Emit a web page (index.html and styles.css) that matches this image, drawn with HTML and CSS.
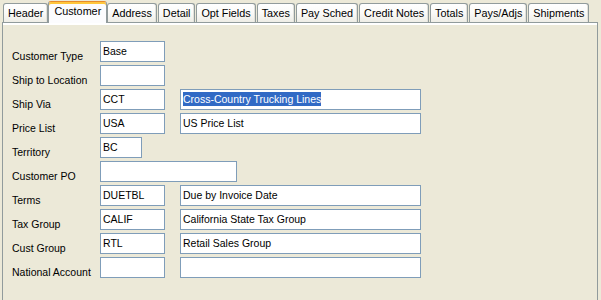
FILE: index.html
```html
<!DOCTYPE html>
<html>
<head>
<meta charset="utf-8">
<link rel="stylesheet" href="styles.css">
</head>
<body>
<div class="window">
  <div class="tabs">
    <div class="tab">Header</div>
    <div class="tab active">Customer</div>
    <div class="tab">Address</div>
    <div class="tab">Detail</div>
    <div class="tab">Opt Fields</div>
    <div class="tab">Taxes</div>
    <div class="tab">Pay Sched</div>
    <div class="tab">Credit Notes</div>
    <div class="tab">Totals</div>
    <div class="tab">Pays/Adjs</div>
    <div class="tab">Shipments</div>
  </div>
  <div class="panel">
    <div class="row">
      <div class="label">Customer Type</div>
      <div class="field code">Base</div>
    </div>
    <div class="row">
      <div class="label">Ship to Location</div>
      <div class="field code"></div>
    </div>
    <div class="row">
      <div class="label">Ship Via</div>
      <div class="field code">CCT</div>
      <div class="field desc"><span class="sel">Cross-Country Trucking Lines</span></div>
    </div>
    <div class="row">
      <div class="label">Price List</div>
      <div class="field code">USA</div>
      <div class="field desc">US Price List</div>
    </div>
    <div class="row">
      <div class="label">Territory</div>
      <div class="field short">BC</div>
    </div>
    <div class="row">
      <div class="label">Customer PO</div>
      <div class="field po"></div>
    </div>
    <div class="row">
      <div class="label">Terms</div>
      <div class="field code">DUETBL</div>
      <div class="field desc">Due by Invoice Date</div>
    </div>
    <div class="row">
      <div class="label">Tax Group</div>
      <div class="field code">CALIF</div>
      <div class="field desc">California State Tax Group</div>
    </div>
    <div class="row">
      <div class="label">Cust Group</div>
      <div class="field code">RTL</div>
      <div class="field desc">Retail Sales Group</div>
    </div>
    <div class="row">
      <div class="label">National Account</div>
      <div class="field code"></div>
      <div class="field desc"></div>
    </div>
  </div>
</div>
</body>
</html>
```
FILE: styles.css
```css
html, body {
  margin: 0;
  padding: 0;
  background: #ECE9D8;
  overflow: hidden;
}
body {
  font-family: "Liberation Sans", Arial, sans-serif;
  font-size: 10.5px;
  color: #000;
}
.window {
  width: 601px;
  height: 300px;
}
.tabs {
  display: flex;
  align-items: flex-end;
  height: 22px;
  padding-left: 3px;
  box-sizing: border-box;
  font-size: 10.8px;
}
.tab {
  box-sizing: border-box;
  height: 19px;
  padding: 2px 4px 0 4px;
  line-height: 14px;
  border: 1px solid #919B9C;
  border-bottom: none;
  border-radius: 3px 3px 0 0;
  background: linear-gradient(to bottom, #FFFFFF 0%, #FAFAF8 50%, #EEEDE6 100%);
  box-shadow: inset -1px 0 0 #E3E2DA;
  margin-right: 1px;
  white-space: nowrap;
}
.tab.active {
  position: relative;
  z-index: 1;
  height: 22px;
  margin: 0 0 -1px -1px;
  padding: 2px 5px 0 5px;
  background: #FCFCFE;
  border-top: 1px solid #E68B2C;
  box-shadow: inset 0 2px 0 #FFC73C;
}
.panel {
  box-sizing: border-box;
  height: 290px;
  margin: 0 3px 0 2px;
  border: 1px solid #919B9C;
  background: linear-gradient(to bottom, #FFFFFF 0, #FFFFFF 2px, #ECE9D8 2px);
  padding: 18px 0 0 9px;
}
.row {
  display: flex;
  height: 21px;
  margin-bottom: 3px;
}
.label {
  width: 88px;
  padding-top: 9px;
  line-height: 13px;
  white-space: nowrap;
}
.field {
  box-sizing: border-box;
  height: 21px;
  border: 1px solid #7F9DB9;
  background: #FFFFFF;
  padding: 2px 2px 0 2px;
  line-height: 15px;
  white-space: nowrap;
  overflow: hidden;
}
.code { width: 65px; }
.short { width: 42px; }
.po { width: 137px; }
.desc {
  width: 241px;
  margin-left: 15px;
}
.sel {
  background: #316AC5;
  color: #FFFFFF;
  padding: 1px 0;
}
```
